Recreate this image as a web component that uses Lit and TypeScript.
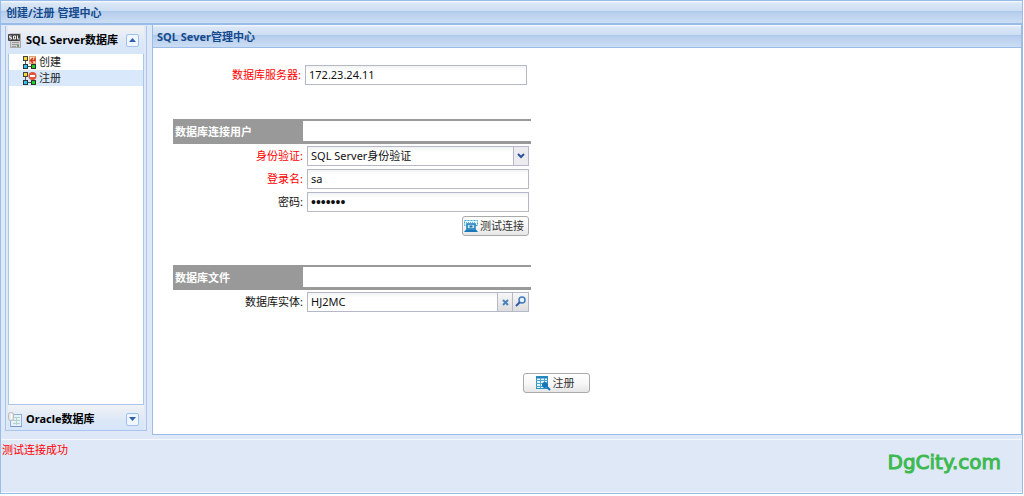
import { LitElement, html, svg, css } from "lit";
import { customElement, state } from "lit/decorators.js";

const serverIcon = svg`<svg width="14" height="15" viewBox="0 0 14 15" aria-hidden="true">
  <rect x="2.500" y="1" width="10" height="13.500" fill="#d4d4d4" stroke="#aaa"/>
  <path d="M4 9.500h7M4 11.500h7M4 13.500h4" stroke="#999"/>
  <rect x="0" y="1" width="12" height="7" rx="1" fill="#444"/>
  <path d="M3.500 3h-2v1.500h2V6h-2M5.500 3h2v3h-2zM9.500 2.500V6h2" fill="none" stroke="#eee"/>
  <rect x="9" y="12" width="2" height="2" fill="#6a9c6a"/>
</svg>`;

const sheetIcon = svg`<svg width="14" height="15" viewBox="0 0 14 15" aria-hidden="true">
  <rect x="2.500" y="2.500" width="11" height="12" fill="#e4f0fb" stroke="#8fb0da"/>
  <path d="M5 5.500h7M5 8.500h7M5 11.500h7M8.500 5v8" stroke="#b3d3c6"/>
  <path d="M3 14.500h11" stroke="#7797cc"/>
  <rect x="0.500" y="0.500" width="5" height="8" rx="2" fill="#e8e8e8" stroke="#bbb"/>
  <path d="M3.500 2v5" stroke="#fff"/>
</svg>`;

const nodes = svg`<path d="M2.500 4v5M4 10.500h5M10.500 5v4" fill="none" stroke="#555"/>
  <rect x="0.500" y="0.500" width="4" height="4" fill="#f7dc25" stroke="#444"/>
  <rect x="0.500" y="8.500" width="4" height="4" fill="#25c9ef" stroke="#333"/>
  <rect x="8.500" y="8.500" width="4" height="4" fill="#19d425" stroke="#333"/>`;

const createIcon = svg`<svg width="14" height="13" viewBox="0 0 14 13" aria-hidden="true">${nodes}
  <rect x="6.500" y="0.500" width="6" height="7" fill="#fbe3c0" stroke="#e0a070"/>
  <path d="M12 1.500v3H8M10 2L7.500 4.500 10 7" fill="none" stroke="#d5361d" stroke-width="1.500"/>
</svg>`;

const registerIcon = svg`<svg width="14" height="13" viewBox="0 0 14 13" aria-hidden="true">${nodes}
  <circle cx="9.500" cy="4" r="4" fill="#e2553c"/><rect x="7" y="3" width="5" height="2" fill="#fff"/>
</svg>`;

const testIcon = svg`<svg width="14" height="12" viewBox="0 0 14 12" aria-hidden="true">
  <rect x="0.500" y="0.500" width="13" height="5" fill="#e5f5fc" stroke="#3ba5d6" stroke-dasharray="2 1"/>
  <path d="M2 2.500h10" stroke="#68bde2" stroke-dasharray="1 1"/>
  <rect x="3" y="4" width="8" height="5" fill="#c6e8f8" stroke="#1b79b8" stroke-width="1.500"/>
  <path d="M5.500 6.500h3" stroke="#1771ae" stroke-width="2"/>
  <path d="M2 9.500h10l2 2.500H0z" fill="#1979b9"/>
</svg>`;

const tableIcon = svg`<svg width="15" height="15" viewBox="0 0 15 15" aria-hidden="true">
  <rect x="0.500" y="0.500" width="11" height="12" fill="#e7f6fc" stroke="#2b92c6"/>
  <path d="M0 1.500h12" stroke="#2485bb" stroke-width="2"/>
  <path d="M0 4.500h12M0 7.500h12M0 10.500h12M4.500 2v10M8.500 2v10" stroke="#4ba6d2"/>
  <circle cx="9" cy="9" r="3" fill="#1676b7"/>
  <path d="M11 11l3 3" stroke="#1676b7" stroke-width="2"/>
</svg>`;

@customElement("app-root")
export class AppRoot extends LitElement {
  @state() private current = "注册";

  static styles = css`
    :host {
      display: block;
      font: 11px/16px "Noto Sans", "Noto Sans CJK SC", sans-serif;
      color: #111;
    }
    * { box-sizing: border-box; }
    h1, h2, h3, p, ul { margin: 0; padding: 0; font-size: 11px; }
    ul { list-style: none; }
    button, input, select { font: inherit; color: inherit; margin: 0; }
    svg { flex: none; }
    .shell {
      display: flex;
      flex-direction: column;
      min-height: calc(100vh - 2px);
      margin-right: 1px;
      background: #dfe8f6;
      border: 1px solid #99bce8;
    }
    .bar {
      display: flex;
      align-items: center;
      height: 24px;
      padding: 2px 5px 0;
      color: #15498b;
      background: linear-gradient(#f0f5fb 0 1px, #dae7f6 2px, #cddef3 46%, #abc7ec 47%, #b8cfee 54%, #cbddf3);
      border-bottom: 2px solid #99bce8;
    }
    .workspace { flex: 1; display: flex; gap: 5px; padding: 0 0 4px 4px; }
    .sidebar {
      display: flex;
      flex-direction: column;
      flex: 0 0 142px;
      margin: 1px 0 4px;
      padding: 0 2px;
      border: 1px solid #a9c5ee;
      border-top: 0;
    }
    .group {
      display: flex;
      align-items: center;
      gap: 4px;
      height: 28px;
      padding: 0 5px 0 0;
      color: #000;
      background: linear-gradient(#f2f2f4, #dce8f8 60%, #d6e5f8);
    }
    .group.closed { height: 25px; padding-top: 3px; }
    .group h2 { flex: 1; white-space: nowrap; }
    .toggle {
      display: grid;
      place-items: center;
      width: 13px;
      height: 13px;
      padding: 0;
      background: #f0f6ff;
      border: 1px solid #9fc0ef;
      border-radius: 2px;
    }
    .list { flex: 1; background: #fff; border: 1px solid #a9c5ee; border-top: 0; }
    .item { display: flex; align-items: center; gap: 2px; height: 16px; padding-left: 14px; color: #222; text-decoration: none; }
    .item.active { background: #d9e8fb; }
    .main { flex: 1; min-width: 0; background: #fff; border: 1px solid #99bce8; border-top: 0; }
    .main .bar { height: 23px; padding-left: 4px; border-bottom-width: 1px; }
    .form { width: 378px; padding: 17px 0 0 20px; }
    .row { display: grid; grid-template-columns: 130px 222px; gap: 4px; align-items: center; height: 20px; margin-bottom: 3px; }
    .row.server { grid-template-columns: 128px 222px; margin-bottom: 34px; }
    .row label { text-align: right; white-space: nowrap; }
    .required { color: #f00; }
    .field {
      width: 100%;
      min-width: 0;
      height: 20px;
      padding: 0 3px 1px;
      background: linear-gradient(#f1f3f3, #fff 5px);
      border: 1px solid #b5b8c8;
      border-radius: 0;
      outline: none;
    }
    .field[type="password"] { font-family: "Liberation Sans", sans-serif; font-size: 14px; }
    .combo { display: grid; }
    .combo > * { grid-area: 1 / 1; }
    .combo select { appearance: none; padding-bottom: 0; }
    .arrow { justify-self: end; display: grid; place-items: center; width: 16px; background: #ecebf0; border: 1px solid #b5b8c8; pointer-events: none; }
    .lookup { display: flex; }
    .lookup .field { flex: 1; border-right: 0; }
    .trigger { display: grid; place-items: center; flex: 0 0 16px; height: 20px; padding: 0; border: 1px solid #b5b8c8; background: linear-gradient(#f7f7f7, #ddd); }
    .trigger + .trigger { border-left: 0; }
    .section { height: 25px; margin-bottom: 2px; border: solid #999; border-width: 2px 0 3px; }
    .section h3 { width: 130px; height: 20px; padding-left: 2px; color: #fff; line-height: 22px; background: #999; }
    .actions { display: flex; justify-content: flex-end; padding: 1px 2px 29px 0; }
    .button {
      display: flex;
      align-items: center;
      justify-content: center;
      gap: 2px;
      width: 67px;
      height: 20px;
      padding: 0 3px 0 0;
      color: #333;
      white-space: nowrap;
      background: linear-gradient(#fff, #f8f8f8 50%, #e6e6e6);
      border: 1px solid #aaa;
      border-radius: 3px;
    }
    .submit { margin: 61px 0 24px 370px; }
    .status {
      display: flex;
      justify-content: space-between;
      height: 54px;
      padding-left: 1px;
      border: solid #f5f8fd;
      border-width: 1px 0;
    }
    .status p { padding-top: 2px; color: #f00; font-weight: 400; }
    .brand { padding: 11px 21px 0 0; color: #3cb950; font: 20px/22px "DejaVu Sans", sans-serif; -webkit-text-stroke: 1px #3cb950; }
  `;

  private item(label: string, icon: unknown) {
    return html`<li><a class="item ${this.current === label ? "active" : ""}" href="#"
      @click=${(e: Event) => { e.preventDefault(); this.current = label; }}>${icon}<span>${label}</span></a></li>`;
  }

  render() {
    return html`
      <div class="shell">
        <header class="bar"><h1>创建/注册 管理中心</h1></header>
        <div class="workspace">
          <nav class="sidebar">
            <div class="group">${serverIcon}<h2>SQL Server数据库</h2>
              <button class="toggle" aria-label="折叠"><svg width="7" height="4"><path d="M0 4L3.500 0 7 4z" fill="#2e5fb0"/></svg></button>
            </div>
            <ul class="list">${this.item("创建", createIcon)}${this.item("注册", registerIcon)}</ul>
            <div class="group closed">${sheetIcon}<h2>Oracle数据库</h2>
              <button class="toggle" aria-label="展开"><svg width="7" height="4"><path d="M0 0L3.500 4 7 0z" fill="#2e5fb0"/></svg></button>
            </div>
          </nav>
          <main class="main">
            <div class="bar"><h2>SQL Sever管理中心</h2></div>
            <form @submit=${(e: Event) => e.preventDefault()}>
              <div class="form">
                <div class="row server"><label class="required" for="server">数据库服务器:</label>
                  <input class="field" id="server" value="172.23.24.11"></div>
                <div class="section"><h3>数据库连接用户</h3></div>
                <div class="row"><label class="required" for="auth">身份验证:</label>
                  <div class="combo"><select class="field" id="auth"><option>SQL Server身份验证</option></select>
                    <span class="arrow"><svg width="8" height="6"><path d="M1 1l3 3 3-3" fill="none" stroke="#2d539c" stroke-width="2"/></svg></span></div></div>
                <div class="row"><label class="required" for="login">登录名:</label>
                  <input class="field" id="login" value="sa"></div>
                <div class="row"><label for="password">密码:</label>
                  <input class="field" id="password" type="password" value="1234567"></div>
                <div class="actions"><button class="button" type="button">${testIcon}<span>测试连接</span></button></div>
                <div class="section"><h3>数据库文件</h3></div>
                <div class="row"><label for="entity">数据库实体:</label>
                  <div class="lookup"><input class="field" id="entity" value="HJ2MC">
                    <button class="trigger" type="button" aria-label="清除"><svg width="7" height="7"><path d="M1 1l5 5M6 1L1 6" stroke="#4b83bd" stroke-width="2"/></svg></button>
                    <button class="trigger" type="button" aria-label="查找"><svg width="12" height="12"><circle cx="7" cy="4" r="3" fill="#e9f2fb" stroke="#457bbd" stroke-width="1.500"/><path d="M5 6L1 10" stroke="#3159a5" stroke-width="2"/></svg></button>
                  </div></div>
              </div>
              <button class="button submit" type="submit">${tableIcon}<span>注册</span></button>
            </form>
          </main>
        </div>
        <footer class="status"><p role="status">测试连接成功</p><div class="brand">DgCity.com</div></footer>
      </div>`;
  }
}
